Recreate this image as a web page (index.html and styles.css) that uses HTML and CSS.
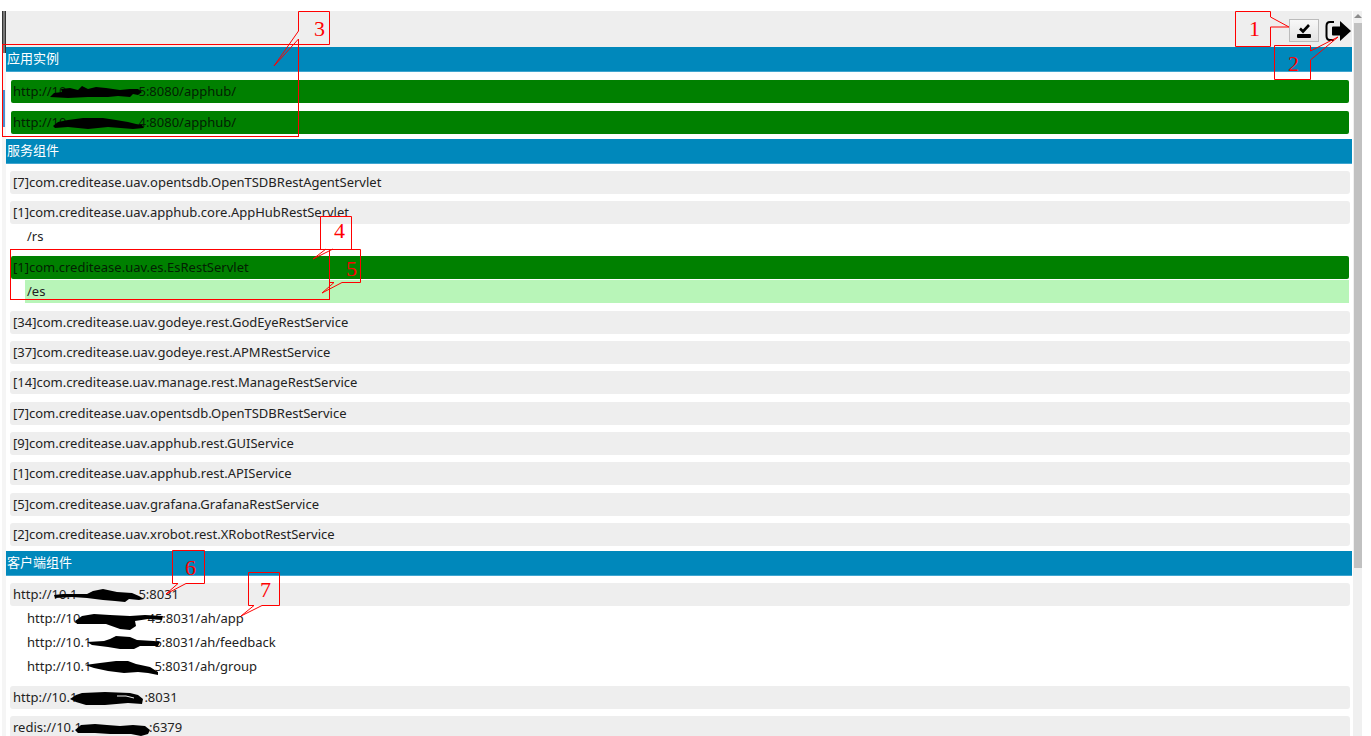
FILE: index.html
```html
<!DOCTYPE html>
<html lang="zh-CN">
<head>
<meta charset="utf-8">
<title>应用服务与组件</title>
<link rel="stylesheet" href="styles.css">
</head>
<body>
<div class="page">
  <div class="rail"><span class="rail-dark"></span><span class="rail-mark"></span></div>

  <main class="content">
    <div class="toolbar">
      <button class="select-btn" type="button" aria-label="全选">
        <svg width="16" height="16" viewBox="0 0 16 16"><path d="M4 5.5l3 3L13 2" fill="none" stroke="#000" stroke-width="2.6"/><rect x="1" y="11" width="14" height="4" rx="1"/></svg>
      </button>
      <button class="exit-btn" type="button" aria-label="退出">
        <svg width="28" height="24" viewBox="0 0 28 24"><path d="M10 3H6Q2.500 3 2.500 7V17Q2.500 21 6 21H10" fill="none" stroke="#000" stroke-width="2"/><path d="M9 7.500H16V2L27 12 16 22V16.500H9Q8 16.500 8 15.500V8.500Q8 7.500 9 7.500Z"/></svg>
      </button>
    </div>

    <section>
      <h2 class="title">应用实例</h2>
      <ul class="list list--apps">
        <li class="entry"><div class="row row--on">http://10<span class="mask mask--host"><svg><path d="M-16 12L-12 8 -4 7 -5 4 4 3 12 5 16 1 22 4 30 2 40 3 54 5 64 4 72 4 76 7 72 10 67 9 64 12 52 11 42 12 22 12 2 13Z"/></svg></span>5:8080/apphub/</div></li>
        <li class="entry"><div class="row row--on">http://10<span class="mask mask--host"><svg><path d="M-13 10L-8 6 2 4 17 2 37 2 50 4 62 6 70 8 76 9 78 12 67 13 42 11 22 13 2 11 -11 12Z"/></svg></span>4:8080/apphub/</div></li>
      </ul>
    </section>

    <section>
      <h2 class="title">服务组件</h2>
      <ul class="list">
        <li class="entry"><div class="row">[7]com.creditease.uav.opentsdb.OpenTSDBRestAgentServlet</div></li>
        <li class="entry entry--open"><div class="row">[1]com.creditease.uav.apphub.core.AppHubRestServlet</div>
          <ul class="sub"><li class="path">/rs</li></ul></li>
        <li class="entry entry--open"><div class="row row--on">[1]com.creditease.uav.es.EsRestServlet</div>
          <ul class="sub"><li class="path path--on">/es</li></ul></li>
        <li class="entry"><div class="row">[34]com.creditease.uav.godeye.rest.GodEyeRestService</div></li>
        <li class="entry"><div class="row">[37]com.creditease.uav.godeye.rest.APMRestService</div></li>
        <li class="entry"><div class="row">[14]com.creditease.uav.manage.rest.ManageRestService</div></li>
        <li class="entry"><div class="row">[7]com.creditease.uav.opentsdb.OpenTSDBRestService</div></li>
        <li class="entry"><div class="row">[9]com.creditease.uav.apphub.rest.GUIService</div></li>
        <li class="entry"><div class="row">[1]com.creditease.uav.apphub.rest.APIService</div></li>
        <li class="entry"><div class="row">[5]com.creditease.uav.grafana.GrafanaRestService</div></li>
        <li class="entry"><div class="row">[2]com.creditease.uav.xrobot.rest.XRobotRestService</div></li>
      </ul>
    </section>

    <section>
      <h2 class="title">客户端组件</h2>
      <ul class="list">
        <li class="entry entry--open"><div class="row">http://10.1<span class="mask mask--short"><svg><path d="M-23 7L-14 6 -2 6 10 6 16 3 26 1 40 4 55 5 62 8 67 11 62 12 52 11 48 14 38 13 26 12 10 10 -5 9 -22 10Z"/></svg></span>5:8031</div>
          <ul class="sub">
            <li class="path">http://10<span class="mask mask--app"><svg><path d="M-5 9L2 4 14 2 30 3 50 4 65 3 83 4 82 8 68 7 55 9 56 14 50 18 40 17 26 12 10 12 -3 12Z"/></svg></span>45:8031/ah/app</li>
            <li class="path">http://10.1<span class="mask mask--path"><svg><path d="M-4 6L13 5 19 3 25 0 39 1 46 4 63 5 69 6 67 10 49 10 43 13 29 13 17 11 1 9Z"/></svg></span>5:8031/ah/feedback</li>
            <li class="path">http://10.1<span class="mask mask--path"><svg><path d="M-6 5L9 3 25 1 37 1 45 4 59 7 67 12 67 15 57 13 47 12 33 13 17 11 3 8Z"/></svg></span>5:8031/ah/group</li>
          </ul></li>
        <li class="entry"><div class="row">http://10.1<span class="mask mask--ip"><svg><path d="M-7 8L-1 4 5 2 28 1 53 2 61 4 66 8 65 13 51 12 28 14 9 14 -1 11Z"/><path d="M40 5L49 5 57 7" fill="none" stroke="#eee"/></svg></span>:8031</div></li>
        <li class="entry"><div class="row">redis://10.1<span class="mask mask--ip"><svg><path d="M-7 9L-1 4 13 3 25 4 38 5 51 4 63 5 68 9 66 13 59 15 49 13 28 13 13 12 -4 12Z"/></svg></span>:6379</div></li>
      </ul>
    </section>
  </main>

  <div class="scrollbar"><span class="arrow"></span><span class="thumb"></span></div>

  <svg class="notes notes--left" width="370" height="620">
    <rect x="2.500" y="44.500" width="296" height="92"/>
    <path d="M298.500 31V11.500H329.500V44.500H298.500V39L274 66Z"/>
    <rect x="10.500" y="249.500" width="319" height="50"/>
    <path d="M326 249L313 259 333 249M320.500 249V216.500H351.500V249.500"/>
    <path d="M329.500 249.500H360.500V282.500H342L322 293 334 282.500H329.500"/>
    <path d="M178 583.500H172.500V550.500H204.500V583.500H186L166 594Z"/>
    <path d="M254 605.500H248.500V572.500H279.500V605.500H262L241 616Z"/>
    <text x="314" y="36">3</text><text x="334" y="238">4</text><text x="346" y="276">5</text>
    <text x="185" y="575">6</text><text x="260" y="597">7</text>
  </svg>
  <svg class="notes notes--right" width="140" height="90">
    <path d="M39.500 17V11.500H4.500V46.500H39.500V27L58 27Z"/>
    <path d="M79.500 51V45.500H43.500V79.500H79.500V60L107 37Z"/>
    <text x="18" y="36">1</text><text x="57" y="71">2</text>
  </svg>
</div>
</body>
</html>
```
FILE: styles.css
```css
* { box-sizing: border-box; }

body {
  margin: 0;
  background: #fff;
  color: #222;
  font-family: "Noto Sans", "Noto Sans CJK SC", sans-serif;
  font-size: 13px;
}

.page {
  position: relative;
  display: flex;
  height: 100vh;
  padding: 11px 9px 0 2px;
  overflow: hidden;
}

ul { margin: 0; padding: 0; list-style: none; }

.rail {
  display: flex;
  flex-direction: column;
  gap: 37px;
  width: 4px;
  background: #f5f5f5;
}
.rail-dark { height: 42px; background: #777; border: solid #333; border-width: 0 1px; }
.rail-mark { width: 3px; height: 37px; border-right: 2px solid #4a90d0; }

.content { flex: 1; min-width: 0; }

.toolbar {
  display: flex;
  justify-content: flex-end;
  align-items: center;
  gap: 5px;
  height: 36px;
  padding-top: 3px;
  background: #eee;
}
.select-btn {
  display: flex;
  align-items: center;
  justify-content: center;
  width: 30px;
  height: 23px;
  padding: 0;
  border: 1px solid #bbb;
  background: linear-gradient(#f8f8f8, #e4e4e4);
}
.exit-btn { display: flex; padding: 0; border: 0; background: none; }

.title {
  height: 25px;
  margin: 0;
  padding: 0 1px;
  border-bottom: 1px solid #3fa5d0;
  background: #0088bb;
  color: #fff;
  font-size: 13px;
  font-weight: 400;
  line-height: 22px;
}

.list { padding: 7px 2px 5px 4px; }
.list--apps { padding: 8px 3px 5px 5px; }

.entry { margin-bottom: 7px; }
.entry--open, .entry:nth-child(3n), .list--apps .entry { margin-bottom: 8px; }
.list .entry:last-child { margin-bottom: 0; }

.row {
  height: 23px;
  padding: 0 3px;
  border-radius: 3px;
  background: #eee;
  line-height: 23px;
  white-space: nowrap;
}
.row--on { margin: 0 1px; padding: 0 2px; background: #008000; color: #032003; border-radius: 2px; }
.list--apps .row--on { margin: 0; }

.sub { padding-left: 15px; padding-right: 1px; }
.path { height: 23px; margin-top: 1px; padding-left: 2px; line-height: 23px; white-space: nowrap; }
.path--on { background: #b8f5b8; }

.mask { display: inline-block; height: 16px; vertical-align: middle; }
.mask svg { display: block; position: relative; width: 100%; height: 16px; overflow: visible; fill: #000; }
.mask--host { width: 72px; }
.mask--short { width: 61px; }
.mask--app { width: 67px; }
.mask--path { width: 63px; }
.mask--ip { width: 67px; }

.scrollbar {
  display: flex;
  flex-direction: column;
  align-items: center;
  width: 9px;
  margin-left: 1px;
  padding-top: 3px;
  gap: 5px;
  background: #f0f0f0;
}
.arrow { border: 4px solid transparent; border-top-width: 0; border-bottom-color: #8c8c8c; }
.thumb { width: 8px; height: 75.5%; background: #c1c1c1; }

.notes {
  position: absolute;
  top: 0;
  fill: none;
  stroke: #f00;
  stroke-width: 1px;
  pointer-events: none;
}
.notes--left { left: 0; }
.notes--right { right: 0; }
.notes text {
  fill: #f00;
  stroke: none;
  font-family: "Liberation Serif", serif;
  font-size: 22px;
}
```
